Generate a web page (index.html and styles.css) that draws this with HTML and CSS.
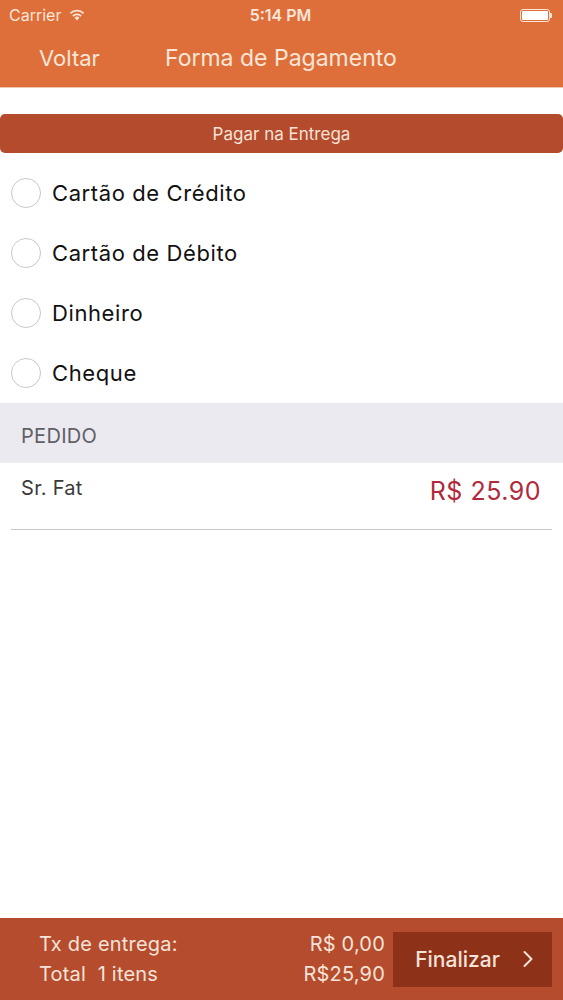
FILE: index.html
```html
<!DOCTYPE html>
<html>
  <head>
    <meta charset="UTF-8">
    <meta name=viewport content="width=device-width, initial-scale=1">
    <link rel="stylesheet" href="styles.css">
  </head>
  <body>
    <div id="app">
      <div id="header">
        <div id="status-bar">
          <div class="status-left">
            Carrier
            <svg class="wifi" width="16" height="12" viewBox="0 0 16 12">
              <path d="M8 11.5 L5.6 8.8 A3.4 3.4 0 0 1 10.4 8.8 Z" fill="#fbe6d8"/>
              <path d="M3.9 7 A5.8 5.8 0 0 1 12.1 7" stroke="#fbe6d8" stroke-width="1.8" fill="none"/>
              <path d="M1.4 4.4 A9.4 9.4 0 0 1 14.6 4.4" stroke="#fbe6d8" stroke-width="1.8" fill="none"/>
            </svg>
          </div>
          <div class="status-time">5:14 PM</div>
          <div class="status-right">
            <div class="battery"><div class="battery-level"></div></div>
            <div class="battery-tip"></div>
          </div>
        </div>
        <div id="nav-bar">
          <div class="nav-back">Voltar</div>
          <div class="nav-title">Forma de Pagamento</div>
        </div>
      </div>

      <div id="content">
        <div class="pay-button">Pagar na Entrega</div>

        <div class="radio-list">
          <div class="radio-row"><span class="radio"></span>Cartão de Crédito</div>
          <div class="radio-row"><span class="radio"></span>Cartão de Débito</div>
          <div class="radio-row"><span class="radio"></span>Dinheiro</div>
          <div class="radio-row"><span class="radio"></span>Cheque</div>
        </div>

        <div class="section-title">PEDIDO</div>
        <div class="order-row">
          <div class="order-name">Sr. Fat</div>
          <div class="order-price">R$ 25.90</div>
        </div>
      </div>

      <div id="footer">
        <div class="totals">
          <div class="totals-row"><span>Tx de entrega:</span><span>R$ 0,00</span></div>
          <div class="totals-row"><span>Total&nbsp; 1 itens</span><span>R$25,90</span></div>
        </div>
        <div class="finish-button">
          Finalizar
          <svg width="12" height="18" viewBox="0 0 12 18">
            <path d="M2.5 2 L9.5 9 L2.5 16" stroke="#f6e3da" stroke-width="2" fill="none" stroke-linecap="round" stroke-linejoin="round"/>
          </svg>
        </div>
      </div>
    </div>
  </body>
</html>
```

FILE: styles.css
```css
body {
  margin: 0;
  background-color: #ffffff;
  font-family: Inter, Roboto, "Noto Sans", sans-serif;
  color: #111111;
}

#app {
  width: 563px;
  height: 1000px;
  display: flex;
  flex-direction: column;
  overflow: hidden;
}

#header {
  background-color: #df6f3a;
  color: #fbe6d8;
  height: 87px;
  box-shadow: 0 1px 0 #f1c6b0;
}

#status-bar {
  height: 30px;
  display: flex;
  align-items: center;
  justify-content: space-between;
  padding: 0 9px;
  font-size: 16px;
}

.status-left {
  width: 120px;
  display: flex;
  align-items: center;
  gap: 8px;
}

.status-time {
  font-weight: 600;
}

.status-right {
  width: 120px;
  display: flex;
  justify-content: flex-end;
  align-items: center;
  padding-right: 2px;
}

.battery {
  border: 1px solid #fbe6d8;
  border-radius: 3px;
  padding: 1px;
  box-sizing: border-box;
  width: 30px;
  height: 13px;
}

.battery-level {
  background-color: #ffffff;
  height: 100%;
  border-radius: 1px;
}

.battery-tip {
  width: 2px;
  height: 5px;
  background-color: #fbe6d8;
  border-radius: 0 1px 1px 0;
}

#nav-bar {
  height: 57px;
  display: flex;
  align-items: center;
  font-size: 22px;
  padding-bottom: 2px;
  box-sizing: border-box;
}

.nav-back {
  margin-left: 39px;
  width: 126px;
}

.nav-title {
  font-size: 23px;
}

#content {
  flex-grow: 1;
  padding-top: 27px;
}

.pay-button {
  background-color: #b44b2c;
  color: #f8e2d8;
  height: 39px;
  border-radius: 5px;
  display: flex;
  align-items: center;
  justify-content: center;
  font-size: 17px;
}

.radio-list {
  padding-top: 10px;
}

.radio-row {
  height: 60px;
  display: flex;
  align-items: center;
  font-size: 22px;
  letter-spacing: 0.6px;
  padding-left: 11px;
}

.radio {
  width: 28px;
  height: 28px;
  border: 1.5px solid #c8c8c8;
  border-radius: 50%;
  margin-right: 11px;
}

.section-title {
  background-color: #ebeaf0;
  color: #5f5f66;
  height: 60px;
  display: flex;
  align-items: center;
  padding-left: 21px;
  padding-top: 6px;
  font-size: 20px;
  letter-spacing: 0.3px;
  box-sizing: border-box;
}

.order-row {
  display: flex;
  justify-content: space-between;
  align-items: flex-start;
  margin: 0 11px;
  padding: 13px 11px 0 10px;
  height: 67px;
  box-sizing: border-box;
  border-bottom: 1px solid #c9c9cc;
}

.order-name {
  font-size: 20px;
  letter-spacing: 0.3px;
  color: #3a3a3a;
}

.order-price {
  font-size: 25px;
  letter-spacing: 0.5px;
  color: #b02a3c;
}

#footer {
  height: 82px;
  background-color: #b54c2d;
  color: #f6e3da;
  display: flex;
  align-items: center;
  padding-left: 39px;
  padding-right: 11px;
}

.totals {
  flex-grow: 1;
  display: flex;
  flex-direction: column;
  gap: 6px;
  font-size: 20px;
  letter-spacing: 0.2px;
  padding-right: 8px;
}

.totals-row {
  display: flex;
  justify-content: space-between;
}

.finish-button {
  width: 159px;
  height: 55px;
  background-color: #8d3118;
  display: flex;
  align-items: center;
  justify-content: center;
  gap: 22px;
  font-size: 21px;
  font-weight: 500;
  padding-left: 4px;
  box-sizing: border-box;
}
```
